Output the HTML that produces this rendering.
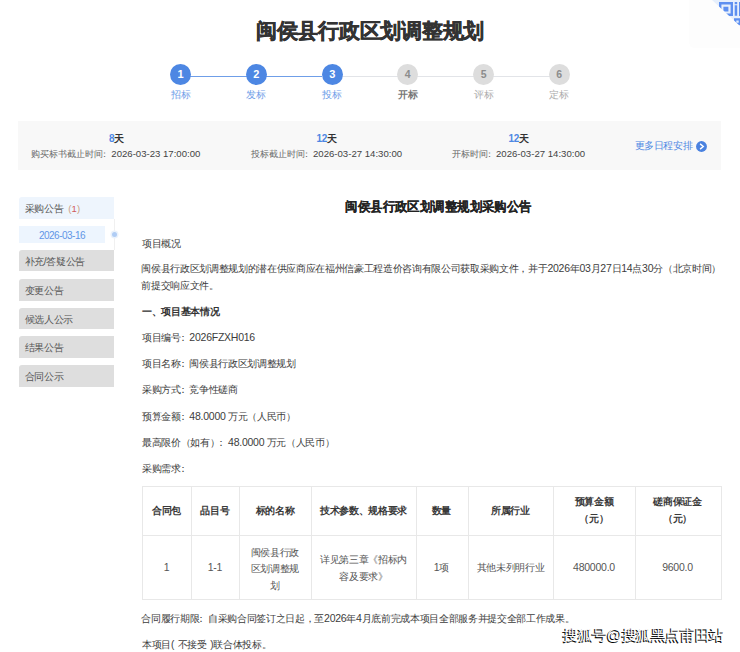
<!DOCTYPE html>
<html><head><meta charset="utf-8">
<style>
*{margin:0;padding:0;box-sizing:border-box}
html,body{width:740px;height:652px;overflow:hidden;background:#fff}
body{position:relative;font-family:"Liberation Sans",sans-serif;color:#333}
div{position:absolute;white-space:nowrap}
.title{left:0;width:740px;top:16.2px;text-align:center;font-size:21px;letter-spacing:-0.25px;font-weight:bold;color:#333;line-height:30px;-webkit-text-stroke:0.45px #333}
.step{top:64px;width:21px;height:21px;border-radius:50%;text-align:center;line-height:21px;font-size:11px;font-weight:bold;color:#fff}
.on{background:#4d87e3}
.off{background:#dddddd;color:#8c8c8c;font-size:10.5px}
.sl{top:75.8px;height:1.7px}
.lab{top:88px;width:40px;text-align:center;font-size:10px;line-height:14px}
.bar{left:18px;top:121px;width:703px;height:49px;background:#f8f8f8}
.days{top:131.5px;font-size:10px;letter-spacing:-0.33px;font-weight:bold;line-height:14px;text-align:center;width:200px;color:#333}
.days b{color:#4d87e3}
.dg{font-size:9.6px;color:#444}
.dl{top:146.5px;font-size:9px;line-height:14px;color:#666}
.side{left:19px;width:95px;height:21.5px;background:#dedede;border-top-left-radius:3px;font-size:10px;letter-spacing:-0.33px;line-height:23.5px;padding-left:5.5px;color:#555}
.t{left:142px;font-size:10px;letter-spacing:-0.33px;line-height:14px;color:#3c3c3c}
.hl{height:1px;background:#e8e8e8}
.vl{width:1px;background:#e8e8e8;top:486px;height:114px}
.c{font-size:10px;letter-spacing:-0.33px;line-height:16.5px;text-align:center;color:#555}
.h{font-weight:bold;color:#3a3a3a}
.n{font-size:10.5px;letter-spacing:-0.25px;line-height:0}
.co{margin-left:-3px;margin-right:2px}
</style></head><body>
<!-- top right qr corner -->
<div style="left:689px;top:0;width:51px;height:48px;background:#fdfdfd;border-bottom-left-radius:6px"></div>
<svg style="position:absolute;left:689px;top:0" width="51" height="48" viewBox="689 0 51 48">
<defs><clipPath id="tri"><polygon points="712,0 740,0 740,26"/></clipPath></defs>
<g clip-path="url(#tri)">
<rect x="689" y="0" width="51" height="48" fill="#e6effc"/>
<path fill="#5d8ff0" fill-rule="evenodd" d="M719 2h14v14h-14zM721.4 4.4v9.2h9.2v-9.2zM723.4 6.8h5v4.8h-5zM734.7 2h2.5v2.2h-2.5zM734.7 5.3h2.5v10.5h-2.5zM739 2h1v14h-1zM734 18.2h6v7h-6zM736.3 20.4v2.4h2.4v-2.4z"/>
</g>
</svg>

<div class="title">闽侯县行政区划调整规划</div>

<div class="sl" style="left:190px;width:132px;background:#6f9ee8"></div>
<div class="sl" style="left:342px;width:208px;background:#e2e4e8"></div>
<div class="step on" style="left:170px">1</div>
<div class="step on" style="left:245.8px">2</div>
<div class="step on" style="left:321.7px">3</div>
<div class="step off" style="left:397.1px">4</div>
<div class="step off" style="left:473.2px">5</div>
<div class="step off" style="left:548.7px">6</div>
<div class="lab" style="left:160.5px;color:#6f9ee8">招标</div>
<div class="lab" style="left:236.3px;color:#6f9ee8">发标</div>
<div class="lab" style="left:312.2px;color:#6f9ee8">投标</div>
<div class="lab" style="left:387.6px;color:#777;font-weight:bold">开标</div>
<div class="lab" style="left:463.7px;color:#aaa">评标</div>
<div class="lab" style="left:539.2px;color:#aaa">定标</div>

<div class="bar"></div>
<div class="days" style="left:16.5px"><b>8</b>天</div>
<div class="dl" style="left:31.3px">购买标书截止时间<span class="co">：</span><span class="dg">2026-03-23 17:00:00</span></div>
<div class="days" style="left:226.5px"><b>12</b>天</div>
<div class="dl" style="left:251px">投标截止时间<span class="co">：</span><span class="dg">2026-03-27 14:30:00</span></div>
<div class="days" style="left:418.5px"><b>12</b>天</div>
<div class="dl" style="left:452px">开标时间<span class="co">：</span><span class="dg">2026-03-27 14:30:00</span></div>
<div style="left:634.5px;top:138.5px;font-size:10px;letter-spacing:-0.4px;line-height:14px;color:#4d87e3">更多日程安排</div>
<svg style="position:absolute;left:696px;top:140.8px" width="11" height="11" viewBox="0 0 11 11"><circle cx="5.5" cy="5.5" r="5.45" fill="#4a82e0"/><path d="M4.1 2.9L7.3 5.5L4.1 8.1" stroke="#fff" stroke-width="1.4" fill="none"/></svg>

<div class="side" style="top:197.3px;height:21.8px;background:#eef5fd">采购公告<span style="font-size:9.5px;letter-spacing:0.2px;margin-left:5px"><span style="color:#c9a080">(</span><span style="color:#d05a5a">1</span><span style="color:#c9a080">)</span></span></div>
<div style="left:113.5px;top:219px;width:1px;height:31px;background:#f0f0f0"></div>
<div style="left:19px;top:226.2px;width:86px;height:16.7px;background:#edf5fe;font-size:10px;letter-spacing:-0.5px;line-height:19.5px;text-align:center;color:#6096e6">2026-03-16</div>
<div style="left:112.2px;top:232px;width:5px;height:5px;border-radius:50%;background:#b0cdf5;box-shadow:0 0 0 1.5px #eaf2fc"></div>
<div class="side" style="top:249.7px">补充/答疑公告</div>
<div class="side" style="top:279px">变更公告</div>
<div class="side" style="top:307.5px">候选人公示</div>
<div class="side" style="top:336.4px">结果公告</div>
<div class="side" style="top:365.3px">合同公示</div>

<div style="left:0;width:877px;top:199px;text-align:center;font-size:13px;font-weight:bold;line-height:16px;color:#222;-webkit-text-stroke:0.12px #222;transform:scaleX(0.955);transform-origin:438.5px 0">闽侯县行政区划调整规划采购公告</div>
<div class="t" style="top:236.5px">项目概况</div>
<div class="t" style="top:261.5px;left:141.3px">闽侯县行政区划调整规划的潜在供应商应在福州信豪工程造价咨询有限公司获取采购文件，并于<span class="n">2026</span>年<span class="n">03</span>月<span class="n">27</span>日<span class="n">14</span>点<span class="n">30</span>分（北京时间）</div>
<div class="t" style="top:279px;left:141.3px">前提交响应文件。</div>
<div class="t" style="top:304.5px;font-weight:bold;color:#333">一、项目基本情况</div>
<div class="t" style="top:331px">项目编号<span class="co">：</span><span class="n">2026FZXH016</span></div>
<div class="t" style="top:357px">项目名称<span class="co">：</span>闽侯县行政区划调整规划</div>
<div class="t" style="top:383px">采购方式<span class="co">：</span>竞争性磋商</div>
<div class="t" style="top:409.5px">预算金额<span class="co">：</span><span class="n">48.0000</span> 万元（人民币）</div>
<div class="t" style="top:436px">最高限价（如有）<span class="co">：</span><span class="n">48.0000</span> 万元（人民币）</div>
<div class="t" style="top:462px">采购需求<span class="co">：</span></div>

<!-- table -->
<div class="hl" style="left:142px;top:486px;width:579px"></div>
<div class="hl" style="left:142px;top:535px;width:579px"></div>
<div class="hl" style="left:142px;top:599px;width:579px"></div>
<div class="vl" style="left:142px"></div>
<div class="vl" style="left:190.5px"></div>
<div class="vl" style="left:239px"></div>
<div class="vl" style="left:311px"></div>
<div class="vl" style="left:415.5px"></div>
<div class="vl" style="left:467.5px"></div>
<div class="vl" style="left:553px"></div>
<div class="vl" style="left:634.5px"></div>
<div class="vl" style="left:720.5px"></div>

<div class="c h" style="left:142px;width:49px;top:502.5px">合同包</div>
<div class="c h" style="left:190.5px;width:49px;top:502.5px">品目号</div>
<div class="c h" style="left:239px;width:72px;top:502.5px">标的名称</div>
<div class="c h" style="left:311px;width:105px;top:502.5px">技术参数、规格要求</div>
<div class="c h" style="left:415.5px;width:52px;top:502.5px">数量</div>
<div class="c h" style="left:467.5px;width:86px;top:502.5px">所属行业</div>
<div class="c h" style="left:553px;width:82px;top:494px">预算金额<br>（元）</div>
<div class="c h" style="left:634.5px;width:86px;top:494px">磋商保证金<br>（元）</div>

<div class="c" style="left:142px;width:49px;top:560px"><span class="n">1</span></div>
<div class="c" style="left:190.5px;width:49px;top:560px"><span class="n">1-1</span></div>
<div class="c" style="left:239px;width:72px;top:544.5px">闽侯县行政<br>区划调整规<br>划</div>
<div class="c" style="left:311px;width:105px;top:552px">详见第三章《招标内<br>容及要求》</div>
<div class="c" style="left:415.5px;width:52px;top:560px"><span class="n">1</span>项</div>
<div class="c" style="left:467.5px;width:86px;top:560px">其他未列明行业</div>
<div class="c" style="left:553px;width:82px;top:560px"><span class="n">480000.0</span></div>
<div class="c" style="left:634.5px;width:86px;top:560px"><span class="n">9600.0</span></div>

<div class="t" style="top:611.5px;left:141.3px">合同履行期限<span class="co">：</span>自采购合同签订之日起，至<span class="n">2026</span>年<span class="n">4</span>月底前完成本项目全部服务并提交全部工作成果。</div>
<div class="t" style="top:637.5px;word-spacing:1.2px">本项目( 不接受 )联合体投标。</div>

<div style="left:562px;top:627px;font-size:15px;letter-spacing:-0.4px;line-height:18px;color:#000;-webkit-text-stroke:0.25px #000">搜狐号@搜狐黑点甫田站</div>
<div style="left:563px;top:626.4px;font-size:15px;letter-spacing:-0.4px;line-height:18px;color:#fff">搜狐号@搜狐黑点甫田站</div>
</body></html>
